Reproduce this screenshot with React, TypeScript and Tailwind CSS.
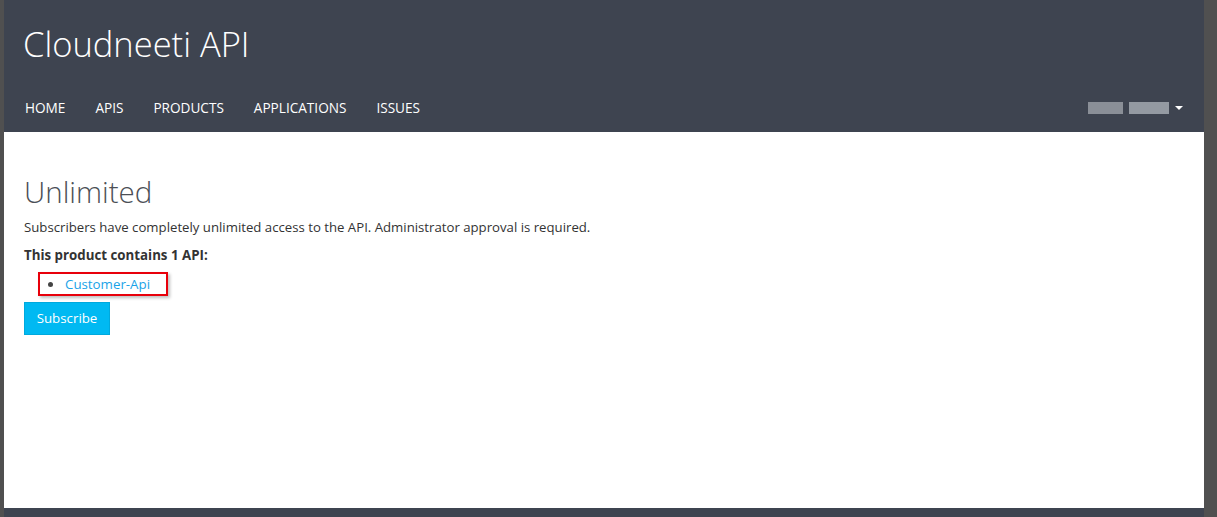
import React from "react";

const navItems = ["HOME", "APIS", "PRODUCTS", "APPLICATIONS", "ISSUES"];

function Header() {
  return (
    <div className="h-[132px] bg-[#3e4450] text-white flex flex-col">
      <div className="pl-[19px] pt-[22px] text-[34.5px] font-light leading-[44px]">
        Cloudneeti API
      </div>
      <div className="mt-[32px] flex items-center justify-between pr-[21px]">
        <ul className="flex text-[13.6px] leading-[20px] pl-[6px]">
          {navItems.map((item) => (
            <li key={item} className="px-[15px]">
              {item}
            </li>
          ))}
        </ul>
        <div className="flex items-center gap-[6px]">
          <span className="flex h-[12px] gap-[1px] blur-[0.6px]">
            <span className="w-[35px] bg-[#8a8f97]" />
            <span className="w-[4px]" />
            <span className="w-[40px] bg-[#949aa2]" />
          </span>
          <span className="w-0 h-0 border-l-[4px] border-r-[4px] border-t-[4px] border-l-transparent border-r-transparent border-t-white" />
        </div>
      </div>
    </div>
  );
}

function Content() {
  return (
    <div className="flex-1 bg-white px-[20px] pt-[40px] text-[#333]">
      <h1 className="text-[29.5px] font-light leading-[40px] text-[#4b4f56]">Unlimited</h1>
      <p className="mt-[5px] text-[13.2px] leading-[20px] text-[#333]">
        Subscribers have completely unlimited access to the API. Administrator approval is required.
      </p>
      <p className="mt-[8px] text-[13.3px] leading-[20px] font-bold text-[#333]">
        This product contains 1 API:
      </p>
      <div className="mt-[7px] ml-[14px] w-[130px] h-[24px] border-2 border-[#e8000b] shadow-[2px_2px_3px_rgba(0,0,0,0.25)] flex items-center pl-[8px]">
        <span className="w-[5px] h-[5px] rounded-full bg-[#444] mr-[12px]" />
        <span className="text-[13.3px] leading-[20px] text-[#1aa3e8]">Customer-Api</span>
      </div>
      <button className="mt-[6px] h-[33px] w-[86px] bg-[#00b9f2] border border-[#00a9dd] text-white text-[13.3px]">
        Subscribe
      </button>
    </div>
  );
}

export default function App() {
  return (
    <div
      className="w-[1217px] h-[517px] flex bg-[#505050] overflow-hidden"
      style={{ fontFamily: '"Open Sans", "Noto Sans", "Liberation Sans", sans-serif' }}
    >
      <div className="w-[4px]" />
      <div className="w-[1200px] flex flex-col">
        <Header />
        <Content />
        <div className="h-[9px] bg-[#3e4450]" />
      </div>
      <div className="flex-1" />
    </div>
  );
}
